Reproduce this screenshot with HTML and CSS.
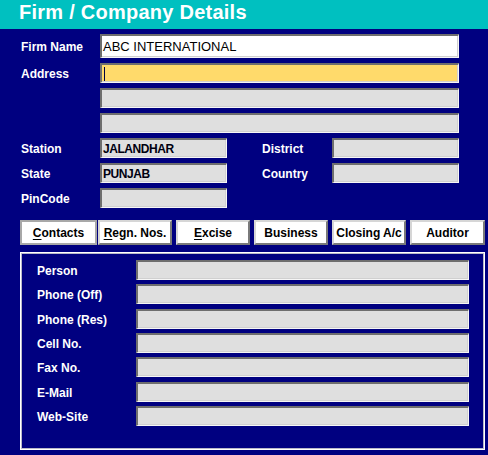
FILE: index.html
```html
<!DOCTYPE html>
<html>
<head>
<meta charset="utf-8">
<link rel="stylesheet" href="styles.css">
</head>
<body>
<div class="app">
  <div class="title">Firm / Company Details</div>
  <div class="form">
    <span class="lbl">Firm Name</span>
    <div class="fld fld-white wide">ABC INTERNATIONAL</div>
    <span class="lbl">Address</span>
    <div class="fld fld-yellow wide"><span class="caret"></span></div>
    <span></span>
    <div class="fld wide"></div>
    <span></span>
    <div class="fld wide"></div>
    <span class="lbl">Station</span>
    <div class="fld val">JALANDHAR</div>
    <span></span>
    <span class="lbl">District</span>
    <div class="fld"></div>
    <span class="lbl">State</span>
    <div class="fld val">PUNJAB</div>
    <span></span>
    <span class="lbl">Country</span>
    <div class="fld"></div>
    <span class="lbl">PinCode</span>
    <div class="fld"></div>
  </div>
  <div class="tabs">
    <div class="tab tab-active"><u>C</u>ontacts</div>
    <div class="tab tab-w74 tab-first"><u>R</u>egn. Nos.</div>
    <div class="tab tab-w74"><u>E</u>xcise</div>
    <div class="tab tab-w74">Business</div>
    <div class="tab tab-w74">Closing A/c</div>
    <div class="tab tab-w75">Auditor</div>
  </div>
  <div class="panel">
    <span class="plbl">Person</span><div class="fld"></div>
    <span class="plbl">Phone (Off)</span><div class="fld"></div>
    <span class="plbl">Phone (Res)</span><div class="fld"></div>
    <span class="plbl">Cell No.</span><div class="fld"></div>
    <span class="plbl">Fax No.</span><div class="fld"></div>
    <span class="plbl">E-Mail</span><div class="fld"></div>
    <span class="plbl">Web-Site</span><div class="fld"></div>
  </div>
</div>
</body>
</html>
```

FILE: styles.css
```css
html, body {
  margin: 0;
  padding: 0;
  background: #000080;
}
.app {
  width: 488px;
  height: 455px;
  background: #000080;
  font-family: "Liberation Sans", Arial, sans-serif;
  overflow: hidden;
}
.title {
  height: 29px;
  line-height: 25px;
  background: #00c0c0;
  color: #ffffff;
  font-weight: bold;
  font-size: 20px;
  letter-spacing: 0.25px;
  padding-left: 19px;
  box-sizing: border-box;
}
.form {
  display: grid;
  grid-template-columns: 80px 127px 34px 71px 127px;
  grid-template-rows: 24px;
  grid-auto-rows: 20px;
  row-gap: 5px;
  padding-left: 20px;
  margin-top: 5px;
}
.lbl {
  color: #ffffff;
  font-weight: bold;
  font-size: 12px;
  display: flex;
  align-items: center;
  padding-left: 1px;
  padding-top: 1px;
}
.fld {
  box-sizing: border-box;
  background: #dfdfdf;
  border-top: 2px solid #6e6e6e;
  border-left: 2px solid #6e6e6e;
  border-right: 1px solid #f6f6f6;
  border-bottom: 1px solid #f6f6f6;
  box-shadow: inset -1px -1px 0 #d0d0d0;
  display: flex;
  align-items: center;
  padding-left: 1px;
  color: #000000;
  font-size: 13px;
}
.wide {
  grid-column: 2 / 6;
}
.fld-white {
  background: #ffffff;
}
.fld-yellow {
  background: #ffda6b;
}
.caret {
  display: block;
  width: 1px;
  height: 14px;
  background: #000040;
  margin-left: 1px;
}
.val {
  font-weight: bold;
  font-size: 12px;
  letter-spacing: -0.45px;
  color: #000010;
}
.tabs {
  display: flex;
  padding-left: 20px;
  margin-top: 12px;
  height: 25px;
}
.tab {
  box-sizing: border-box;
  height: 25px;
  background: #ffffff;
  border-top: 2px solid #d6d6d6;
  border-left: 2px solid #d6d6d6;
  border-right: 2px solid #7a7a7a;
  border-bottom: 2px solid #7a7a7a;
  display: flex;
  align-items: center;
  justify-content: center;
  font-size: 12px;
  font-weight: bold;
  color: #000000;
  margin-left: 4px;
}
.tab-active {
  width: 77px;
  margin-left: 0;
  border: 2px solid #a8a8a8;
}
.tab-first {
  margin-left: 1px;
}
.tab-w74 {
  width: 74px;
}
.tab-w75 {
  width: 75px;
}
.tab u {
  text-decoration: underline;
  text-underline-offset: 2px;
}
.panel {
  box-sizing: border-box;
  margin-top: 7px;
  margin-left: 20px;
  width: 465px;
  height: 198px;
  border: 1px solid #ffffff;
  box-shadow: inset 1px 1px 0 #b8b8c8, inset -1px -1px 0 #b8b8c8;
  padding: 7px 15px 0 15px;
  display: grid;
  grid-template-columns: 100px 1fr;
  grid-auto-rows: 20px;
  row-gap: 4.33px;
  align-content: start;
}
.plbl {
  color: #ffffff;
  font-weight: bold;
  font-size: 12px;
  display: flex;
  align-items: center;
  padding-left: 1px;
  padding-top: 2px;
}
```
